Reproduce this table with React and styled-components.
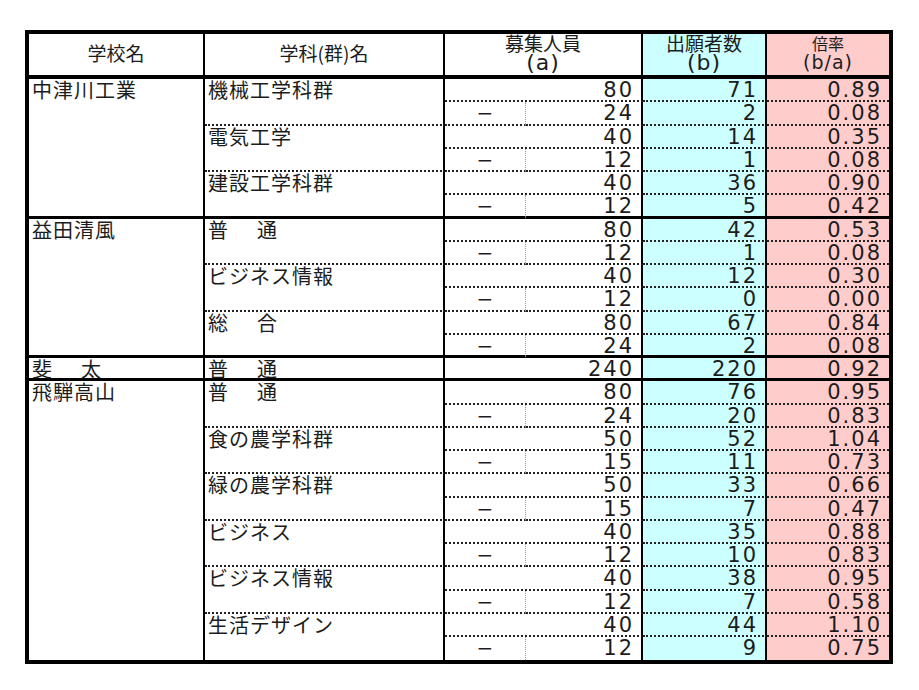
import React from 'react';
import styled, { createGlobalStyle } from 'styled-components';

const CJK = `"Noto Sans CJK JP", sans-serif`;
const LATIN = `"DejaVu Sans", "Noto Sans CJK JP", sans-serif`;

const CYAN = '#ccffff';
const PINK = '#ffcccc';

// bottom rule of a row: dotted inside a school, solid between schools
const rule = {
  dotted: '2px dotted #222',
  solid: '3px solid #000',
  none: 'none',
};

const GlobalStyle = createGlobalStyle`
  html, body {
    margin: 0;
    padding: 0;
    background: #fff;
  }
  * {
    box-sizing: border-box;
  }
`;

const Page = styled.div`
  padding: 30px 0 0 25px;
`;

const Table = styled.table`
  width: 868px;
  table-layout: fixed;
  border-collapse: separate;
  border-spacing: 0;
  border: 4px solid #000;
  color: #1c1c1c;
`;

const Col = styled.col`
  width: ${p => p.$w}px;
`;

const HeadRow = styled.tr`
  height: 45px;
`;

const Row = styled.tr`
  height: 23.26px;
`;

const Th = styled.th`
  padding: 0 0 ${p => (p.$single ? '3px' : '0')};
  font-weight: normal;
  text-align: center;
  vertical-align: ${p => (p.$single ? 'middle' : 'top')};
  background: ${p => p.$bg || '#fff'};
  border-bottom: 4px solid #000;
  border-right: ${p => (p.$last ? 'none' : '2px solid #000')};
  font-family: ${CJK};
  font-size: 19px;
  line-height: 20px;
`;

const HeadMain = styled.div`
  font-family: ${CJK};
  font-size: ${p => p.$size || 19}px;
  line-height: 18px;
`;

const HeadSub = styled.div`
  margin-top: 1px;
  font-family: ${LATIN};
  font-size: ${p => p.$size || 22}px;
  line-height: ${p => (p.$size ? 18 : 20)}px;
  letter-spacing: 1px;
`;

const NameCell = styled.td`
  padding: 3px 0 0 3px;
  vertical-align: top;
  font-family: ${CJK};
  font-size: 20px;
  line-height: 16px;
  letter-spacing: ${p => (p.$spread ? '29px' : '1px')};
  white-space: nowrap;
  border-right: 2px solid #000;
  border-bottom: ${p => rule[p.$edge]};
`;

const NumCell = styled.td`
  padding: 2px 7px 0 0;
  vertical-align: top;
  text-align: right;
  font-family: ${LATIN};
  font-size: 21px;
  line-height: 18px;
  letter-spacing: 2px;
  background: ${p => p.$bg || '#fff'};
  border-right: ${p => (p.$last ? 'none' : '2px solid #000')};
  border-bottom: ${p => rule[p.$edge]};
`;

const DashCell = styled.td`
  padding: 2px 0 0;
  vertical-align: top;
  text-align: center;
  font-family: ${LATIN};
  font-size: 20px;
  line-height: 18px;
  border-right: 1px dotted #9a9a9a;
  border-bottom: ${p => rule[p.$edge]};
`;

const schools = [
  {
    name: '中津川工業',
    depts: [
      { name: '機械工学科群', main: [80, 71, '0.89'], sub: [24, 2, '0.08'] },
      { name: '電気工学', main: [40, 14, '0.35'], sub: [12, 1, '0.08'] },
      { name: '建設工学科群', main: [40, 36, '0.90'], sub: [12, 5, '0.42'] },
    ],
  },
  {
    name: '益田清風',
    depts: [
      { name: '普通', spread: true, main: [80, 42, '0.53'], sub: [12, 1, '0.08'] },
      { name: 'ビジネス情報', main: [40, 12, '0.30'], sub: [12, 0, '0.00'] },
      { name: '総合', spread: true, main: [80, 67, '0.84'], sub: [24, 2, '0.08'] },
    ],
  },
  {
    name: '斐太',
    spread: true,
    depts: [{ name: '普通', spread: true, main: [240, 220, '0.92'] }],
  },
  {
    name: '飛騨高山',
    depts: [
      { name: '普通', spread: true, main: [80, 76, '0.95'], sub: [24, 20, '0.83'] },
      { name: '食の農学科群', main: [50, 52, '1.04'], sub: [15, 11, '0.73'] },
      { name: '緑の農学科群', main: [50, 33, '0.66'], sub: [15, 7, '0.47'] },
      { name: 'ビジネス', main: [40, 35, '0.88'], sub: [12, 10, '0.83'] },
      { name: 'ビジネス情報', main: [40, 38, '0.95'], sub: [12, 7, '0.58'] },
      { name: '生活デザイン', main: [40, 44, '1.10'], sub: [12, 9, '0.75'] },
    ],
  },
];

export default function App() {
  const rows = [];

  schools.forEach((school, si) => {
    const lastSchool = si === schools.length - 1;
    const span = school.depts.reduce((n, d) => n + (d.sub ? 2 : 1), 0);

    school.depts.forEach((dept, di) => {
      const lastDept = di === school.depts.length - 1;
      const endEdge = lastDept ? (lastSchool ? 'none' : 'solid') : 'dotted';
      const mainEdge = dept.sub ? 'dotted' : endEdge;

      rows.push(
        <Row key={`${si}-${di}-m`}>
          {di === 0 && (
            <NameCell rowSpan={span} $edge={lastSchool ? 'none' : 'solid'} $spread={school.spread}>
              {school.name}
            </NameCell>
          )}
          <NameCell rowSpan={dept.sub ? 2 : 1} $edge={endEdge} $spread={dept.spread}>
            {dept.name}
          </NameCell>
          <NumCell colSpan={2} $edge={mainEdge}>{dept.main[0]}</NumCell>
          <NumCell $bg={CYAN} $edge={mainEdge}>{dept.main[1]}</NumCell>
          <NumCell $bg={PINK} $edge={mainEdge} $last>{dept.main[2]}</NumCell>
        </Row>
      );

      if (dept.sub) {
        rows.push(
          <Row key={`${si}-${di}-s`}>
            <DashCell $edge={endEdge}>−</DashCell>
            <NumCell $edge={endEdge}>{dept.sub[0]}</NumCell>
            <NumCell $bg={CYAN} $edge={endEdge}>{dept.sub[1]}</NumCell>
            <NumCell $bg={PINK} $edge={endEdge} $last>{dept.sub[2]}</NumCell>
          </Row>
        );
      }
    });
  });

  return (
    <>
      <GlobalStyle />
      <Page>
        <Table>
          <colgroup>
            <Col $w={176} />
            <Col $w={240} />
            <Col $w={81} />
            <Col $w={117} />
            <Col $w={124} />
            <Col $w={122} />
          </colgroup>
          <thead>
            <HeadRow>
              <Th $single>学校名</Th>
              <Th $single>学科(群)名</Th>
              <Th colSpan={2}>
                <HeadMain>募集人員</HeadMain>
                <HeadSub>(a)</HeadSub>
              </Th>
              <Th $bg={CYAN}>
                <HeadMain>出願者数</HeadMain>
                <HeadSub>(b)</HeadSub>
              </Th>
              <Th $bg={PINK} $last>
                <HeadMain $size={16}>倍率</HeadMain>
                <HeadSub $size={19}>(b/a)</HeadSub>
              </Th>
            </HeadRow>
          </thead>
          <tbody>{rows}</tbody>
        </Table>
      </Page>
    </>
  );
}
